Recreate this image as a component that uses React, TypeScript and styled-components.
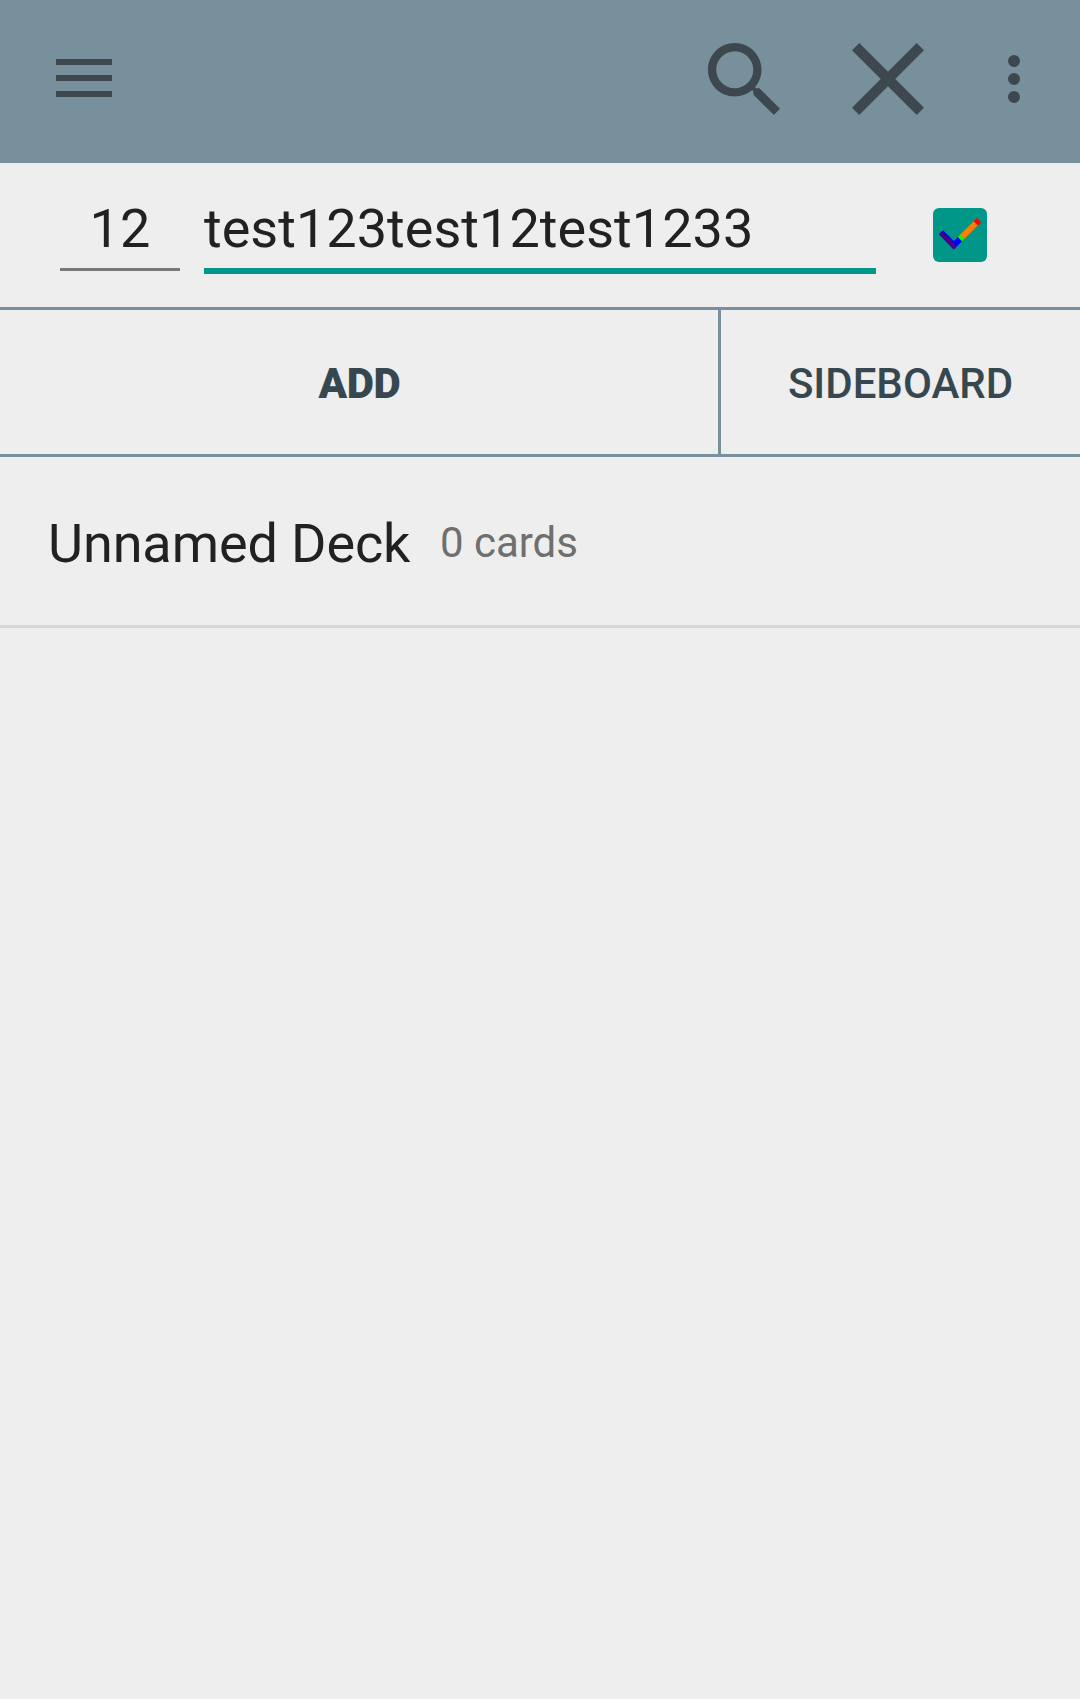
import React from "react";
import styled, { createGlobalStyle } from "styled-components";

const GlobalStyle = createGlobalStyle`
  * { box-sizing: border-box; }
  body {
    margin: 0;
    background: #eeeeee;
    font-family: Roboto, "Noto Sans", sans-serif;
    color: #212121;
  }
`;

const Screen = styled.main`
  display: flex;
  flex-direction: column;
  min-height: 100vh;
  background: #eeeeee;
`;

const Toolbar = styled.header`
  display: flex;
  align-items: center;
  height: 163px;
  padding: 0 60px 5px 56px;
  background: #78909c;
  color: #3d484e;
`;

const IconButton = styled.button<{ $width: number; $gap?: number }>`
  display: flex;
  width: ${(p) => p.$width}px;
  margin: 0 0 0 ${(p) => p.$gap ?? 0}px;
  padding: 0;
  border: 0;
  background: none;
  color: inherit;

  svg {
    display: block;
    fill: currentColor;
  }
`;

const MenuButton = styled(IconButton)`
  padding-bottom: 2px;
`;

const Spacer = styled.div`
  flex: 1;
`;

const EntryRow = styled.section`
  display: flex;
  align-items: flex-start;
  height: 144px;
  padding: 33px 93px 0 60px;
`;

const Field = styled.input<{ $width: number; $focused?: boolean }>`
  width: ${(p) => p.$width}px;
  height: ${(p) => (p.$focused ? 78 : 75)}px;
  margin: 0 24px 0 0;
  padding: 1px 0 8px;
  border: 0;
  border-bottom: ${(p) => (p.$focused ? "6px solid #009688" : "3px solid #777777")};
  border-radius: 0;
  outline: none;
  background: none;
  color: #212121;
  font: 400 54px/63px Roboto, sans-serif;
  letter-spacing: 0.03px;
  text-align: ${(p) => (p.$focused ? "left" : "center")};
`;

const Checkbox = styled.button`
  width: 54px;
  height: 54px;
  margin: 12px 0 0 auto;
  padding: 0;
  border: 0;
  border-radius: 6px;
  background: #009688;

  svg {
    display: block;
  }
`;

const ButtonBar = styled.nav`
  display: flex;
  height: 150px;
  border-top: 3px solid #78909c;
  border-bottom: 3px solid #78909c;
`;

const BarButton = styled.button<{ $grow: number; $weight: number }>`
  flex: ${(p) => p.$grow} 0 0;
  padding: 3px 0 0;
  border: 0;
  background: none;
  color: #37474f;
  font: ${(p) => p.$weight} 42px/49px Roboto, sans-serif;

  & + & {
    border-left: 3px solid #78909c;
  }
`;

const AddLabel = styled.span`
  padding-left: 1px;
  letter-spacing: -0.4px;
`;

const DeckRow = styled.section`
  display: flex;
  align-items: flex-start;
  height: 171px;
  padding: 55px 48px 0;
  border-bottom: 3px solid #d6d6d6;
`;

const DeckName = styled.span`
  font-size: 54px;
  line-height: 64px;
  letter-spacing: -0.1px;
`;

const DeckCount = styled.span`
  margin: 6px 0 0 29.5px;
  color: #6f6f6f;
  font-size: 42px;
  line-height: 50px;
`;

export default function App() {
  return (
    <>
      <GlobalStyle />
      <Screen>
        <Toolbar>
          <MenuButton $width={56} aria-label="Menu">
            <svg width="56" height="38" viewBox="0 0 56 38" shapeRendering="crispEdges">
              <path d="M0 0h56v6H0zM0 16h56v6H0zM0 32h56v6H0z" />
            </svg>
          </MenuButton>
          <Spacer />
          <IconButton $width={72} aria-label="Search">
            <svg width="72" height="72" viewBox="3 3 17.49 17.49">
              <path d="M15.5 14h-.79l-.28-.27C15.41 12.59 16 11.11 16 9.5 16 5.91 13.09 3 9.5 3S3 5.91 3 9.5 5.91 16 9.5 16c1.61 0 3.09-.59 4.23-1.57l.27.28v.79l5 4.99L20.49 19l-4.99-5zm-6 0C7.01 14 5 11.99 5 9.5S7.01 5 9.5 5 14 7.01 14 9.5 11.99 14 9.5 14z" />
            </svg>
          </IconButton>
          <IconButton $width={72} $gap={72} aria-label="Close">
            <svg width="72" height="72" viewBox="5 5 14 14">
              <path d="M19 6.41 17.59 5 12 10.59 6.41 5 5 6.41 10.59 12 5 17.59 6.41 19 12 13.41 17.59 19 19 17.59 13.41 12z" />
            </svg>
          </IconButton>
          <IconButton $width={12} $gap={84} aria-label="More options">
            <svg width="12" height="48" viewBox="0 0 12 48">
              <circle cx="6" cy="6" r="6" />
              <circle cx="6" cy="24" r="6" />
              <circle cx="6" cy="42" r="6" />
            </svg>
          </IconButton>
        </Toolbar>

        <EntryRow>
          <Field $width={120} defaultValue="12" aria-label="Quantity" />
          <Field $width={672} $focused defaultValue="test123test12test1233" spellCheck={false} aria-label="Card name" />
          <Checkbox role="checkbox" aria-checked="true" aria-label="Match name">
            <svg width="54" height="54" viewBox="0 0 54 54">
              <path fill="#0000ff" d="M10 22.3 20.8 33.1 25.1 28.8 29.3 33 20.8 41.5 6 26.3z" />
              <path fill="#4b0082" d="M6 26.3 8.3 24 10.8 25 20.3 34.5 23.2 39.1 20.8 41.5z" />
              <path fill="#00ff00" d="M24.8 29.1 27.6 26.3 31.8 30.5 29 33.3z" />
              <path fill="#ff7f00" d="M27.3 26.6 41 12.9 45.2 17.1 31.5 30.8z" />
              <path fill="#ff0000" d="M40.6 13.3 43.8 10.1 48 14.3 44.8 17.5z" />
            </svg>
          </Checkbox>
        </EntryRow>

        <ButtonBar>
          <BarButton $grow={2} $weight={900}>
            <AddLabel>ADD</AddLabel>
          </BarButton>
          <BarButton $grow={1} $weight={500}>SIDEBOARD</BarButton>
        </ButtonBar>

        <DeckRow>
          <DeckName>Unnamed Deck</DeckName>
          <DeckCount>0 cards</DeckCount>
        </DeckRow>
      </Screen>
    </>
  );
}
